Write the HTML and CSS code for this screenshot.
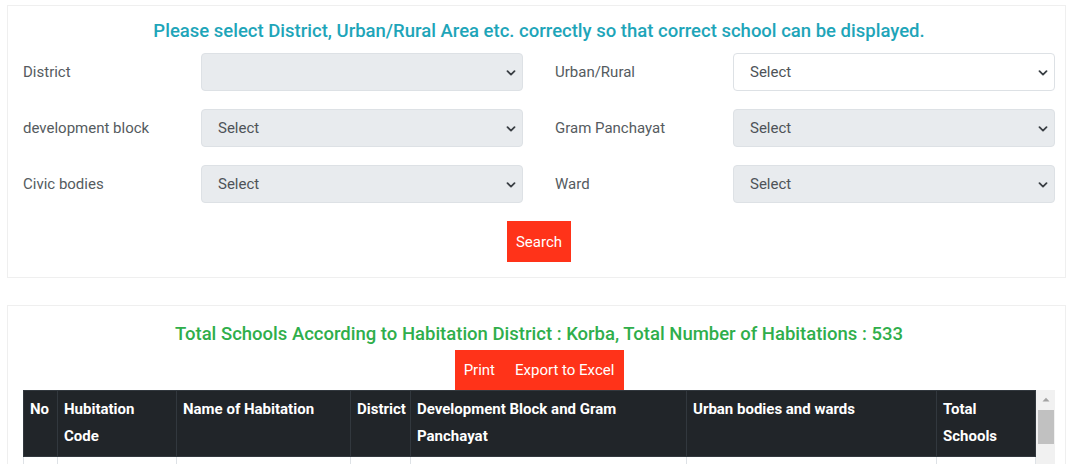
FILE: index.html
```html
<!DOCTYPE html>
<html lang="en">
<head>
<meta charset="utf-8">
<title>School Search</title>
<link rel="stylesheet" href="styles.css">
</head>
<body>
<div class="page">
  <section class="card filter-card">
    <h2 class="title-info">Please select District, Urban/Rural Area etc. correctly so that correct school can be displayed.</h2>
    <div class="form-grid">
      <div class="field">
        <label class="field-label">District</label>
        <div class="select-wrap disabled">
          <span class="select-text"></span>
          <svg class="chev" width="10" height="6" viewBox="0 0 10 6"><path d="M1.5 1.2 L5 4.6 L8.5 1.2" fill="none" stroke="#3a3f44" stroke-width="1.8" stroke-linecap="round" stroke-linejoin="round"/></svg>
        </div>
      </div>
      <div class="field">
        <label class="field-label">Urban/Rural</label>
        <div class="select-wrap">
          <span class="select-text">Select</span>
          <svg class="chev" width="10" height="6" viewBox="0 0 10 6"><path d="M1.5 1.2 L5 4.6 L8.5 1.2" fill="none" stroke="#3a3f44" stroke-width="1.8" stroke-linecap="round" stroke-linejoin="round"/></svg>
        </div>
      </div>
      <div class="field">
        <label class="field-label">development block</label>
        <div class="select-wrap disabled">
          <span class="select-text">Select</span>
          <svg class="chev" width="10" height="6" viewBox="0 0 10 6"><path d="M1.5 1.2 L5 4.6 L8.5 1.2" fill="none" stroke="#3a3f44" stroke-width="1.8" stroke-linecap="round" stroke-linejoin="round"/></svg>
        </div>
      </div>
      <div class="field">
        <label class="field-label">Gram Panchayat</label>
        <div class="select-wrap disabled">
          <span class="select-text">Select</span>
          <svg class="chev" width="10" height="6" viewBox="0 0 10 6"><path d="M1.5 1.2 L5 4.6 L8.5 1.2" fill="none" stroke="#3a3f44" stroke-width="1.8" stroke-linecap="round" stroke-linejoin="round"/></svg>
        </div>
      </div>
      <div class="field">
        <label class="field-label">Civic bodies</label>
        <div class="select-wrap disabled">
          <span class="select-text">Select</span>
          <svg class="chev" width="10" height="6" viewBox="0 0 10 6"><path d="M1.5 1.2 L5 4.6 L8.5 1.2" fill="none" stroke="#3a3f44" stroke-width="1.8" stroke-linecap="round" stroke-linejoin="round"/></svg>
        </div>
      </div>
      <div class="field">
        <label class="field-label">Ward</label>
        <div class="select-wrap disabled">
          <span class="select-text">Select</span>
          <svg class="chev" width="10" height="6" viewBox="0 0 10 6"><path d="M1.5 1.2 L5 4.6 L8.5 1.2" fill="none" stroke="#3a3f44" stroke-width="1.8" stroke-linecap="round" stroke-linejoin="round"/></svg>
        </div>
      </div>
    </div>
    <div class="actions">
      <button class="btn btn-red">Search</button>
    </div>
  </section>

  <section class="card result-card">
    <h2 class="title-success">Total Schools According to Habitation District : Korba, Total Number of Habitations : 533</h2>
    <div class="actions tight">
      <div class="btn-group">
        <button class="btn btn-red">Print</button>
        <button class="btn btn-red">Export to Excel</button>
      </div>
    </div>
    <div class="table-scroll">
      <div class="table-viewport">
        <table class="data-table">
          <colgroup>
            <col class="c-no"><col class="c-code"><col class="c-name"><col class="c-dist"><col class="c-block"><col class="c-urban"><col class="c-total">
          </colgroup>
          <thead>
            <tr>
              <th>No</th>
              <th>Hubitation Code</th>
              <th>Name of Habitation</th>
              <th>District</th>
              <th>Development Block and Gram Panchayat</th>
              <th>Urban bodies and wards</th>
              <th>Total Schools</th>
            </tr>
          </thead>
          <tbody>
            <tr class="empty-row"><td></td><td></td><td></td><td></td><td></td><td></td><td></td></tr>
          </tbody>
        </table>
      </div>
      <div class="scrollbar" aria-hidden="true">
        <div class="sb-btn">
          <svg width="8" height="5" viewBox="0 0 8 5"><path d="M0.5 4.5 L4 0.8 L7.5 4.5 Z" fill="#a3a3a3"/></svg>
        </div>
        <div class="sb-thumb"></div>
      </div>
    </div>
  </section>
</div>
</body>
</html>
```

FILE: styles.css
```css
* { box-sizing: border-box; }
html, body {
  margin: 0;
  padding: 0;
  overflow: hidden;
  background: #ffffff;
}
body {
  font-family: Roboto, "Liberation Sans", Arial, sans-serif;
  font-size: 15px;
  color: #212529;
}
.page {
  padding: 5px 3px 0 7px;
  display: flex;
  flex-direction: column;
  gap: 27px;
}
.card {
  border: 1px solid #efefef;
  background: #fff;
  padding: 12px 10px 15px 15px;
}
.result-card { padding-top: 15px; }
.title-info,
.title-success {
  margin: 0;
  text-align: center;
  font-size: 18.5px;
  font-weight: 500;
  line-height: 26px;
}
.title-info { color: #1ea5b9; }
.title-success { color: #2fae4b; }

.form-grid {
  margin-top: 9px;
  display: grid;
  grid-template-columns: 1fr 1fr;
  column-gap: 32px;
  row-gap: 18px;
}
.field {
  display: grid;
  grid-template-columns: 178px 1fr;
  align-items: center;
}
.field-label {
  color: #555b60;
  font-size: 15px;
}
.select-wrap {
  position: relative;
  height: 38px;
  border: 1px solid #dde1e5;
  border-radius: 4px;
  background: #fff;
  display: flex;
  align-items: center;
  padding: 0 16px;
}
.select-wrap.disabled { background: #e8ebee; }
.select-text {
  color: #4e5358;
  font-size: 15px;
}
.chev {
  position: absolute;
  right: 6px;
  top: 16px;
}
.actions {
  display: flex;
  justify-content: center;
  margin-top: 18px;
}
.actions.tight { margin-top: 3px; }
.btn {
  border: none;
  border-radius: 0;
  font-family: inherit;
  font-size: 15px;
  color: #fff;
  cursor: pointer;
}
.btn-red { background: #ff3319; }
.filter-card .btn {
  height: 41px;
  padding: 0 9px;
}
.btn-group {
  display: flex;
  padding-left: 1px;
}
.btn-group .btn {
  height: 40px;
  padding: 0 9px;
}
.btn-group .btn + .btn { padding-left: 11px; padding-right: 10px; }

.table-scroll {
  display: flex;
  height: 120px;
}
.table-viewport {
  flex: 1;
  overflow: hidden;
}
.scrollbar {
  width: 19px;
  flex: none;
  background: #f1f1f1;
  display: flex;
  flex-direction: column;
  align-items: center;
}
.sb-btn {
  height: 17px;
  width: 100%;
  display: flex;
  align-items: center;
  justify-content: center;
  padding-top: 2px;
}
.sb-thumb {
  margin-top: 3px;
  width: 16px;
  height: 34px;
  background: #c1c1c1;
}
.data-table {
  width: 1012px;
  border-collapse: collapse;
  table-layout: fixed;
}
.c-no { width: 34px; }
.c-code { width: 119px; }
.c-name { width: 174px; }
.c-dist { width: 60px; }
.c-block { width: 276px; }
.c-urban { width: 250px; }
.c-total { width: 99px; }
.data-table th {
  background: #212529;
  color: #fff;
  font-weight: 700;
  text-align: left;
  vertical-align: top;
  font-size: 15px;
  line-height: 27px;
  padding: 5px 6px 6px;
  border: 1px solid #32383e;
}
.data-table td {
  border: 1px solid #dee2e6;
  padding: 12px 6px;
  line-height: 27px;
  vertical-align: top;
}
.empty-row td { height: 51px; }
```
